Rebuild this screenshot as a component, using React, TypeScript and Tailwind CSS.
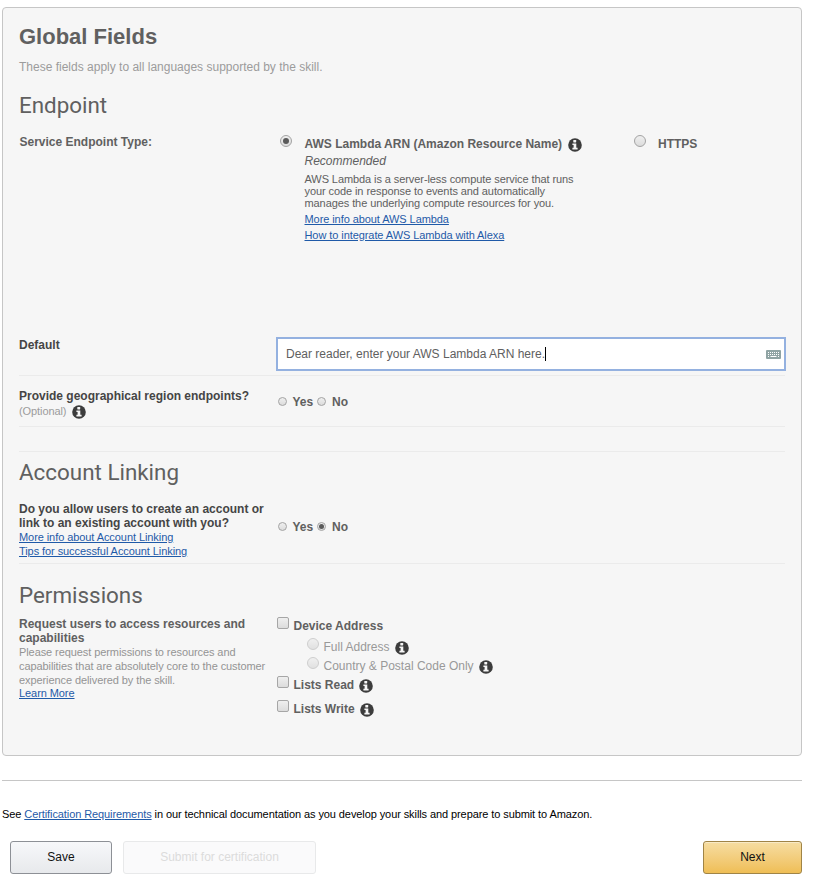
import type { ReactNode } from "react";

function T({ className = "", children }: { className?: string; children: ReactNode }) {
  return <div className={`${className} whitespace-nowrap`}>{children}</div>;
}

function Info({ className }: { className: string }) {
  return (
    <svg viewBox="0 0 14 14" className={`size-[14px] shrink-0 ${className}`}>
      <circle cx="7" cy="7" r="6.8" fill="#3c3c3c" />
      <rect x="5.3" y="2" width="2.9" height="2.4" rx="0.4" fill="#f6f6f6" />
      <path d="M4.4 5.4h3.9v4.4h1.3v1.7H4.4V9.8h1.2V7.1H4.4z" fill="#f6f6f6" />
    </svg>
  );
}

function Keyboard() {
  return (
    <svg viewBox="0 0 15 9" className="mt-[3px] ml-auto h-[9px] w-[15px] shrink-0">
      <rect width="15" height="9" rx="1" fill="#8fa3a3" />
      <path d="M2 2.5h11M2 4.5h11" stroke="#fff" strokeWidth="1" strokeDasharray="1 1" />
      <path d="M2 6.5h1M4.5 6.5h6M12 6.5h1" stroke="#fff" strokeWidth="1" />
    </svg>
  );
}

function Radio({ className, checked, dim }: { className: string; checked?: boolean; dim?: boolean }) {
  return (
    <span
      className={`flex shrink-0 items-center justify-center rounded-full border bg-linear-to-b from-[#efefef] to-[#dcdcdc] ${dim ? "border-[#c4c4c4] opacity-80" : "border-[#a3a3a3]"} ${className}`}
    >
      {checked && <span className="size-3/5 rounded-full bg-[#5a5a5a]" />}
    </span>
  );
}

function Check() {
  return (
    <span className="-mt-[2px] block size-3 shrink-0 rounded-[2px] border border-[#a6a6a6] bg-linear-to-b from-[#efefef] to-[#dcdcdc]" />
  );
}

const small = "text-[11px] tracking-[-0.085px]";
const link = "text-[11px] leading-[12px] tracking-[-0.075px] text-[#1f5aa8] underline";
const b12 = "text-[12px] leading-[14px] font-bold";
const heading = "font-['Roboto',sans-serif] text-[22.4px] leading-[28px]";

function YesNo({ no }: { no?: boolean }) {
  return (
    <div className="flex h-[14px]">
      <Radio className="mt-[2px] ml-[1px] size-[9px]" />
      <T className={`${b12} ml-[5.5px] w-[24.5px]`}>Yes</T>
      <Radio className="mt-[2px] size-[9px]" checked={no} />
      <T className={`${b12} ml-[6px]`}>No</T>
    </div>
  );
}

export default function App() {
  return (
    <div className="h-[894px] w-[814px] overflow-hidden bg-white pt-[7px] pl-[2px] font-['Liberation_Sans',Arial,sans-serif]">
      <main className="h-[749px] w-[800px] rounded-[4px] border border-[#c6c6c6] bg-[#f6f6f6] px-4 text-[#606060]">
        <header className="h-[83px] pt-[16px]">
          <T className="text-[22px] leading-[26px] font-bold">Global Fields</T>
          <T className="mt-[10px] text-[12px] leading-[14px] text-[#9c9c9c]">
            These fields apply to all languages supported by the skill.
          </T>
        </header>

        <section className="h-[245px]">
          <T className={heading}>Endpoint</T>
          <div className="mt-[16px] flex">
            <T className={`${b12} w-[261px] pl-[0.5px]`}>Service Endpoint Type:</T>
            <Radio className="size-3" checked />
            <div className="mt-[2px] ml-[12.5px] w-[329.5px]">
              <div className="flex h-[14px]">
                <T className={b12}>AWS Lambda ARN (Amazon Resource Name)</T>
                <Info className="mt-[1px] ml-[6px]" />
              </div>
              <T className="mt-[3px] text-[12px] leading-[14px] italic">Recommended</T>
              <div className={`${small} mt-[5px] leading-[12px]`}>
                <T>AWS Lambda is a server-less compute service that runs</T>
                <T>your code in response to events and automatically</T>
                <T>manages the underlying compute resources for you.</T>
              </div>
              <T className={`${link} mt-[4px]`}>More info about AWS Lambda</T>
              <T className={`${link} mt-[4px]`}>How to integrate AWS Lambda with Alexa</T>
            </div>
            <Radio className="size-3" />
            <T className={`${b12} mt-[2px] ml-[12px]`}>HTTPS</T>
          </div>
        </section>

        <section className="flex h-[40px] border-b border-[#ebebeb]">
          <T className={`${b12} mt-[2px] w-[257px] shrink-0 text-[#454545]`}>Default</T>
          <div className="mt-[1px] flex h-[34px] w-[510px] shrink-0 border-2 border-[#94b1e0] bg-white pt-[8px] pr-[3px] pl-[8px]">
            <T className="text-[12px] leading-[14px]">Dear reader, enter your AWS Lambda ARN here.</T>
            <span className="h-[14px] w-px bg-black" />
            <Keyboard />
          </div>
        </section>

        <section className="flex h-[51px] border-b border-[#ebebeb]">
          <div className="mt-[13px] w-[258px]">
            <T className={`${b12} text-[#454545]`}>Provide geographical region endpoints?</T>
            <div className="mt-[2px] flex text-[#9c9c9c]">
              <T className={`${small} leading-[12px]`}>(Optional)</T>
              <Info className="ml-[5.5px]" />
            </div>
          </div>
          <div className="mt-[19px]">
            <YesNo />
          </div>
        </section>
        <div className="h-[25px] border-b border-[#ebebeb]" />

        <section className="h-[112px] border-b border-[#ebebeb] pt-[6px]">
          <T className={heading}>Account Linking</T>
          <div className="mt-[16px] flex">
            <div className="w-[258px] text-[#454545]">
              <T className={b12}>Do you allow users to create an account or</T>
              <T className={b12}>link to an existing account with you?</T>
              <T className={`${link} mt-[1px]`}>More info about Account Linking</T>
              <T className={`${link} mt-[2px]`}>Tips for successful Account Linking</T>
            </div>
            <div className="mt-[18px]">
              <YesNo no />
            </div>
          </div>
        </section>

        <section className="pt-[17px]">
          <T className={heading}>Permissions</T>
          <div className="mt-[8px] flex">
            <div className="w-[258px]">
              <T className={b12}>Request users to access resources and</T>
              <T className={b12}>capabilities</T>
              <div className={`${small} leading-[14px] text-[#949494]`}>
                <T>Please request permissions to resources and</T>
                <T>capabilities that are absolutely core to the customer</T>
                <T>experience delivered by the skill.</T>
              </div>
              <T className={link}>Learn More</T>
            </div>
            <div className="pt-[2px]">
              <div className="flex h-[21px]">
                <Check />
                <T className={`${b12} ml-[4.5px]`}>Device Address</T>
              </div>
              <div className="flex h-[19px] pl-[30px] text-[#999999]">
                <Radio dim className="-mt-[2px] size-3" />
                <T className="ml-[4.5px] text-[12px] leading-[14px]">Full Address</T>
                <Info className="mt-[1px] ml-[5.5px]" />
              </div>
              <div className="flex h-[19px] pl-[30px] text-[#999999]">
                <Radio dim className="-mt-[2px] size-3" />
                <T className="ml-[4.5px] text-[12px] leading-[14px]">Country &amp; Postal Code Only</T>
                <Info className="mt-[1px] ml-[5.5px]" />
              </div>
              <div className="flex h-[24px]">
                <Check />
                <T className={`${b12} ml-[4.5px]`}>Lists Read</T>
                <Info className="mt-[1px] ml-[5px]" />
              </div>
              <div className="flex h-[24px]">
                <Check />
                <T className={`${b12} ml-[4.5px]`}>Lists Write</T>
                <Info className="mt-[1px] ml-[5.5px]" />
              </div>
            </div>
          </div>
        </section>
      </main>

      <footer className="mt-[24px] w-[800px] border-t border-[#c6c6c6] pt-[27px] text-black">
        <p className="text-[11px] leading-[12px] tracking-[-0.09px] whitespace-nowrap">
          See <a className="text-[#1f5aa8] underline">Certification Requirements</a> in our technical documentation as
          you develop your skills and prepare to submit to Amazon.
        </p>
        <div className="mt-[21px] flex text-[12px] leading-[14px]">
          <button className="ml-[8px] h-[33px] w-[102px] rounded-[3px] border border-[#8d9096] bg-linear-to-b from-[#f7f8fa] to-[#e7e9ec] pb-px text-[#111111]">
            Save
          </button>
          <button className="ml-[11px] h-[33px] w-[193px] rounded-[3px] border border-[#e8e9ea] bg-[#fafafb] pb-px text-[#dcdcdc]">
            Submit for certification
          </button>
          <button className="ml-auto h-[33px] w-[99px] rounded-[3px] border border-[#a08446] bg-linear-to-b from-[#f6dda1] to-[#efbe55] pb-px text-[#111111] shadow-[inset_0_1px_0_rgba(255,255,255,0.4)]">
            Next
          </button>
        </div>
      </footer>
    </div>
  );
}
